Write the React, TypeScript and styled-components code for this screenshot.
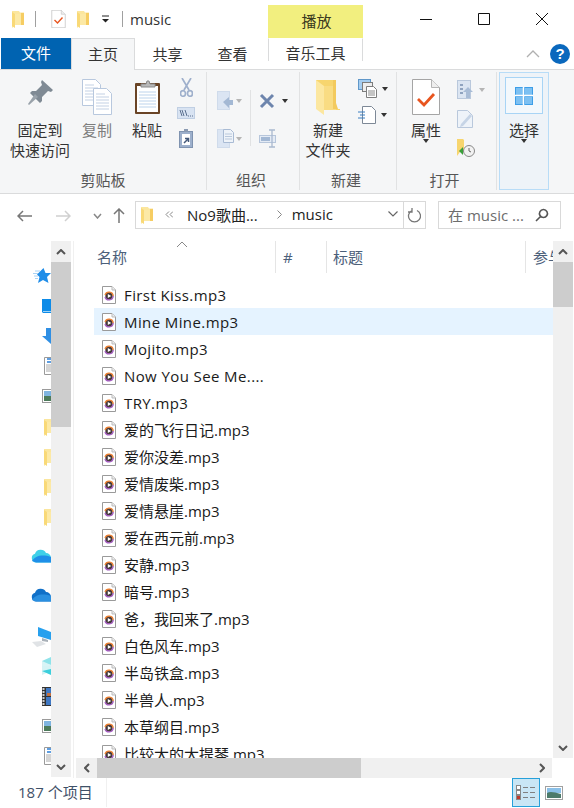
import React from 'react';
import styled, { createGlobalStyle } from 'styled-components';

const GlobalStyle = createGlobalStyle`
  html, body { margin: 0; padding: 0; background: #fff; }
  body {
    width: 574px;
    height: 808px;
    overflow: hidden;
    font-family: "Open Sans", "Noto Sans CJK SC", sans-serif;
    font-size: 15px;
    color: #1a1a1a;
  }
  svg { display: block; flex: none; }
`;

const Window = styled.div`
  width: 574px;
  height: 808px;
  display: flex;
  flex-direction: column;
  overflow: hidden;
`;

/* title bar */
const TitleBar = styled.div`
  height: 38px;
  display: flex;
  flex: none;
`;
const QuickAccess = styled.div`
  width: 268px;
  padding-left: 12px;
  box-sizing: border-box;
  display: flex;
  align-items: center;
`;
const ThinRule = styled.div<{ $ml: number; $mr: number }>`
  width: 1px;
  height: 16px;
  background: #a0a0a0;
  margin: 0 ${p => p.$mr}px 0 ${p => p.$ml}px;
`;
const Gap = styled.span<{ $w: number }>`
  width: ${p => p.$w}px;
`;
const TitleText = styled.span`
  font-size: 15px;
  color: #333;
  line-height: 20px;
`;
const ContextTab = styled.div`
  width: 95px;
  margin-top: 5px;
  background: #f2ef7f;
  color: #3a3a20;
  text-align: center;
  line-height: 33px;
  font-size: 15px;
  padding-left: 2px;
  box-sizing: border-box;
`;
const WindowButtons = styled.div`
  flex: 1;
  display: flex;
  align-items: center;
  padding: 0 0 0 57px;
  gap: 46px;
`;

/* tabs */
const TabRow = styled.div`
  height: 31px;
  display: flex;
  flex: none;
  align-items: stretch;
  position: relative;
`;
const FileTab = styled.div`
  width: 70px;
  flex: none;
  margin-left: 1px;
  background: #0063b1;
  color: #fff;
  text-align: center;
  line-height: 31px;
  font-size: 15px;
`;
const Tab = styled.div<{ $active?: boolean; $w: number }>`
  width: ${p => p.$w}px;
  flex: none;
  box-sizing: border-box;
  text-align: center;
  line-height: 30px;
  font-size: 15px;
  color: #333;
  background: ${p => (p.$active ? '#f5f6f7' : '#fff')};
  border: 1px solid ${p => (p.$active ? '#dadbdc' : 'transparent')};
  border-bottom: 0;
  margin-bottom: ${p => (p.$active ? '-1px' : '0')};
  position: relative;
  z-index: 1;
`;
const MusicTab = styled(Tab)`
  margin-left: 3px;
  border-left: 1px solid #dadbdc;
  border-right: 1px solid #dadbdc;
  margin-bottom: 8px;
  line-height: 28px;
  height: 23px;
`;
const TabTools = styled.div`
  flex: 1;
  display: flex;
  align-items: center;
  justify-content: flex-end;
  padding: 0 4px 0 0;
  gap: 10px;
`;
const HelpBubble = styled.div`
  width: 20px;
  height: 20px;
  border-radius: 50%;
  background: #0a68bd;
  color: #fff;
  font: bold 15px/20px "Liberation Sans", sans-serif;
  text-align: center;
`;

/* ribbon */
const Ribbon = styled.div`
  height: 125px;
  flex: none;
  box-sizing: border-box;
  background: #f5f6f7;
  border-top: 1px solid #dadbdc;
  border-bottom: 1px solid #dadbdc;
  padding-top: 2px;
  display: flex;
`;
const Group = styled.div<{ $w: number }>`
  width: ${p => p.$w}px;
  height: 118px;
  flex: none;
  box-sizing: border-box;
  border-right: 1px solid #e1e2e3;
  display: flex;
  flex-direction: column;
`;
const SelectGroup = styled(Group)`
  margin-left: 2px;
  border: 1px solid #b8dcf7;
  background: #eef3f8;
  align-items: center;
  padding-top: 4px;
`;
const GroupBody = styled.div<{ $pl?: number }>`
  flex: 1;
  display: flex;
  padding-left: ${p => p.$pl ?? 0}px;
`;
const GroupLabel = styled.div<{ $pr?: number }>`
  height: 20px;
  line-height: 20px;
  font-size: 15px;
  color: #555;
  text-align: center;
  padding-right: ${p => p.$pr ?? 0}px;
`;
const BigButton = styled.div<{ $w: number; $dim?: boolean }>`
  width: ${p => p.$w}px;
  display: flex;
  flex-direction: column;
  align-items: center;
  padding-top: 7px;
  font-size: 15px;
  line-height: 20px;
  white-space: nowrap;
  color: ${p => (p.$dim ? '#7d7d7d' : '#333')};
`;
const BigIcon = styled.div`
  height: 41px;
  display: flex;
  align-items: flex-start;
  justify-content: center;
`;
const SmallColumn = styled.div<{ $w: number; $pt: number; $gap: number; $pl?: number; $center?: boolean }>`
  width: ${p => p.$w}px;
  box-sizing: border-box;
  display: flex;
  flex-direction: column;
  align-items: ${p => (p.$center ? 'center' : 'flex-start')};
  padding-top: ${p => p.$pt}px;
  padding-left: ${p => p.$pl ?? 0}px;
  gap: ${p => p.$gap}px;
`;
const SmallRow = styled.div<{ $gap?: number }>`
  display: flex;
  align-items: center;
  gap: ${p => p.$gap ?? 5}px;
  height: 19px;
`;
const InnerRule = styled.div`
  width: 1px;
  height: 56px;
  margin-top: 18px;
  background: #e1e2e3;
`;
const Caret = styled.div<{ $dim?: boolean }>`
  width: 0;
  height: 0;
  border: 3px solid transparent;
  border-top: 4px solid ${p => (p.$dim ? '#b5b5b5' : '#333')};
  border-bottom: 0;
`;
const BigCaret = styled(Caret)`
  margin-top: -1px;
`;
const SelectFrame = styled.div`
  width: 38px;
  height: 37px;
  box-sizing: border-box;
  border: 1px solid #a8d4f5;
  background: #f3f8fc;
  display: flex;
  align-items: center;
  justify-content: center;
  margin-bottom: 6px;
`;
const SelectText = styled.div`
  font-size: 15px;
  line-height: 20px;
  color: #333;
`;

/* address bar */
const AddressRow = styled.div`
  height: 47px;
  flex: none;
  box-sizing: border-box;
  padding: 7px 0 0 17px;
  display: flex;
  align-items: flex-start;
`;
const NavIcon = styled.div<{ $w: number }>`
  width: ${p => p.$w}px;
  height: 29px;
  display: flex;
  align-items: center;
`;
const AddressBox = styled.div`
  width: 291px;
  height: 28px;
  flex: none;
  box-sizing: border-box;
  border: 1px solid #d9d9d9;
  display: flex;
  align-items: center;
  padding-left: 5px;
  font-size: 15px;
  color: #222;
`;
const Crumb = styled.span<{ $ml: number }>`
  margin-left: ${p => p.$ml}px;
  white-space: nowrap;
  padding-bottom: 2px;
`;
const RefreshCell = styled.div`
  margin-left: 5px;
  width: 21px;
  height: 26px;
  border-left: 1px solid #d9d9d9;
  display: flex;
  align-items: center;
  justify-content: center;
`;
const SearchBox = styled.div`
  width: 123px;
  height: 28px;
  flex: none;
  box-sizing: border-box;
  margin-left: 12px;
  border: 1px solid #d9d9d9;
  display: flex;
  align-items: center;
  justify-content: space-between;
  padding: 0 11px 0 9px;
  font-size: 15px;
  color: #6d6d6d;
  white-space: nowrap;
`;
const SearchHint = styled.span`
  padding-bottom: 2px;
`;

/* body */
const Body = styled.div`
  height: 537px;
  flex: none;
  display: flex;
`;
const NavPane = styled.div`
  width: 51px;
  flex: none;
  overflow: hidden;
  padding-top: 20px;
  box-sizing: border-box;
`;
const NavSlot = styled.div<{ $x: number; $gap: number }>`
  height: 30px;
  margin-top: ${p => p.$gap}px;
  padding-left: ${p => p.$x}px;
  display: flex;
  align-items: center;
`;
const VScroll = styled.div<{ $thumb: number; $h: number }>`
  width: 20px;
  height: ${p => p.$h}px;
  flex: none;
  background: #f0f0f0;
  display: flex;
  flex-direction: column;
  & > i {
    display: block;
    height: ${p => p.$thumb}px;
    background: #cdcdcd;
    flex: none;
  }
`;
const ScrollEnd = styled.div`
  height: 21px;
  flex: none;
  display: flex;
  align-items: center;
  justify-content: center;
`;
const ScrollSpacer = styled.div`
  flex: 1;
`;
const PaneRule = styled.div`
  width: 1px;
  margin: 0 2px 0 2px;
  background: #f0f0f0;
  height: 537px;
`;
const Main = styled.div`
  width: 497px;
  flex: none;
  display: flex;
  flex-direction: column;
`;
const MainTop = styled.div`
  height: 517px;
  display: flex;
`;
const ListArea = styled.div`
  width: 477px;
  overflow: hidden;
`;
const HeaderRow = styled.div`
  height: 32px;
  display: flex;
  margin-bottom: 8px;
  color: #4c607a;
  font-size: 15px;
`;
const HeaderCell = styled.div<{ $w: number; $pl: number }>`
  width: ${p => p.$w}px;
  flex: none;
  box-sizing: border-box;
  padding: 5px 0 0 ${p => p.$pl}px;
  border-right: 1px solid #e5e5e5;
  position: relative;
  line-height: 22px;
  white-space: nowrap;
`;
const LastHeaderCell = styled(HeaderCell)`
  border-right: 0;
  overflow: hidden;
`;
const SortMark = styled.div`
  position: absolute;
  top: 0;
  left: 100px;
`;
const FileRow = styled.div<{ $hover?: boolean; $latin?: boolean }>`
  height: 27px;
  margin-left: 18px;
  padding-left: 8px;
  display: flex;
  align-items: center;
  gap: 8px;
  font-size: 15px;
  letter-spacing: ${p => (p.$latin ? '0.4px' : '0')};
  color: #1a1a1a;
  white-space: nowrap;
  background: ${p => (p.$hover ? '#e5f3ff' : 'transparent')};
`;
const HScroll = styled.div`
  height: 20px;
  width: 476px;
  display: flex;
  background: #f0f0f0;
  flex: none;
`;
const HEnd = styled.div`
  width: 21px;
  flex: none;
  display: flex;
  align-items: center;
  justify-content: center;
`;
const HThumb = styled.div`
  width: 264px;
  background: #cdcdcd;
`;

/* status */
const StatusBar = styled.div`
  flex: 1;
  display: flex;
  align-items: stretch;
  padding-left: 18px;
  font-size: 15px;
  color: #3f5168;
`;
const StatusText = styled.div`
  width: 88px;
  line-height: 29px;
  white-space: nowrap;
  border-right: 1px solid #f0f0f0;
  margin-bottom: 4px;
`;
const ViewDetails = styled.div`
  margin-left: 405px;
  width: 28px;
  height: 29px;
  box-sizing: border-box;
  background: #c9e6f5;
  border: 1px solid #26a0da;
  display: flex;
  align-items: center;
  justify-content: center;
`;
const ViewThumb = styled.div`
  margin-left: 5px;
  height: 29px;
  display: flex;
  align-items: center;
`;

/* drawings */
const Folder = ({ w = 12, h = 17 }: { w?: number; h?: number }) => (
  <svg width={w} height={h} viewBox="0 0 12 17">
    <path d="M0 0h7l1 1.500h4V14H3l-3 3z" fill="#fbe69e" />
    <path d="M0 1l3 2v14l-3-2z" fill="#f9d977" />
    <path d="M3 3h6v11H3z" fill="#fce9a6" />
    <path d="M9 2h3v12H9z" fill="#f6cd63" />
  </svg>
);
const BigFolder = () => (
  <svg width="26" height="36" viewBox="0 0 26 36">
    <path d="M1 1h18v29h6v1H9L1 26z" fill="#f7d56e" />
    <path d="M1 1l8 6v29l-8-6z" fill="#fce7a0" />
    <path d="M9 7h11l1 2v22H9z" fill="#f9dc83" />
    <path d="M18 1h3v23l2 6h-5z" fill="#f3ca5e" />
  </svg>
);
const CheckDoc = ({ w, h }: { w: number; h: number }) => (
  <svg width={w} height={h} viewBox="0 0 28 36">
    <path d="M.5.500h19l8 8v27H.5z" fill="#fff" stroke="#a5a5a5" />
    <path d="M19.500.500v8h8" fill="#eee" stroke="#b5b5b5" />
    <path d="M6 20l6 6 10-11" fill="none" stroke="#e8551f" strokeWidth="2.800" />
  </svg>
);
const DropMark = () => (
  <svg width="9" height="8" viewBox="0 0 9 8">
    <path d="M1 1h7" stroke="#222" />
    <path d="M1 4h7L4.500 7.500z" fill="#222" />
  </svg>
);
const Pin = () => (
  <svg width="27" height="27" viewBox="0 0 27 27">
    <path d="M15 1l11 10-2 2-3-1-6 6 0 4-2 2-10-10 2-2 4 0 6-6-1-3z" fill="#7f8a94" />
    <path d="M8 15l3 3-9 8-1-1z" fill="#9aa3ab" />
  </svg>
);
const LinesDoc = ({ x, y }: { x: number; y: number }) => (
  <g transform={`translate(${x} ${y})`}>
    <path d="M.5.500h13l5 5v21H.5z" fill="#fff" stroke="#b8c8de" />
    <path d="M3 6h9M3 9h13M3 12h13M3 15h13M3 18h13M3 21h13" stroke="#c3d1e4" />
  </g>
);
const CopyIcon = () => (
  <svg width="31" height="37" viewBox="0 0 31 37">
    <LinesDoc x={0} y={0} />
    <LinesDoc x={11} y={9} />
  </svg>
);
const PasteIcon = () => (
  <svg width="27" height="36" viewBox="0 0 27 36">
    <rect x="1" y="4" width="25" height="31" rx="1" fill="#6a4426" />
    <rect x="3" y="7" width="21" height="26" fill="#fff" />
    <path d="M5 13h17M5 16h17M5 19h17M5 22h17M5 25h17M5 28h17" stroke="#bcd3ec" />
    <path d="M7 8V5h5l1-3 2 0 1 3h5v3z" fill="#b9b9b9" stroke="#8a8a8a" />
  </svg>
);
const CutIcon = () => (
  <svg width="13" height="19" viewBox="0 0 13 19" fill="none" stroke="#9fb0cc" strokeWidth="1.700">
    <path d="M2 0l7 12M11 0L4 12" />
    <ellipse cx="3" cy="15.500" rx="2.500" ry="2.800" />
    <ellipse cx="10" cy="15.500" rx="2.500" ry="2.800" />
  </svg>
);
const PathIcon = () => (
  <svg width="18" height="12" viewBox="0 0 18 12">
    <rect x=".5" y=".5" width="17" height="11" fill="#d8e3f2" stroke="#c0cfe3" />
    <path d="M3 3l2 6M5 3l2 6M8 3l2 6" stroke="#5a6f8e" />
    <path d="M11 9h1M13 9h1M15 9h1" stroke="#5a6f8e" />
  </svg>
);
const ShortcutPaste = () => (
  <svg width="14" height="19" viewBox="0 0 14 19">
    <rect x=".5" y="2.500" width="13" height="16" fill="#9db0cc" stroke="#7f93b0" />
    <rect x="3" y="5" width="8" height="11" fill="#fff" />
    <path d="M5 0h4v3H5z" fill="#8a9ab2" />
    <path d="M5 14l4-4M6 9.500h3.500V13" stroke="#44597a" strokeWidth="1.500" fill="none" />
  </svg>
);
const MoveIcon = ({ copy }: { copy?: boolean }) => (
  <svg width="18" height="19" viewBox="0 0 18 19">
    <rect x=".5" y=".5" width="12" height="18" fill="#dbe5f3" stroke="#cfdbeb" />
    {copy ? (
      <>
        <path d="M6.500.500h7l3 3v10h-10z" fill="#eef3f9" stroke="#a9bbd4" />
        <path d="M8 5h7M8 7.500h7M8 10h7" stroke="#b9c8dc" />
      </>
    ) : (
      <path d="M6 11l6-5v3h4v5h-4v3z" fill="#a3b8d4" />
    )}
  </svg>
);
const DeleteIcon = () => (
  <svg width="16" height="16" viewBox="0 0 16 16">
    <path d="M2 2l12 12M14 2L2 14" stroke="#6d85ad" strokeWidth="3" />
  </svg>
);
const RenameIcon = () => (
  <svg width="18" height="19" viewBox="0 0 18 19">
    <rect x=".5" y="6.500" width="16" height="7" fill="#e4ebf5" stroke="#b7c6db" />
    <rect x="2" y="8" width="9" height="4" fill="#a3b8d4" />
    <path d="M10 1h6M10 18h6M13 1v17" stroke="#a9b9d0" strokeWidth="1.300" />
  </svg>
);
const NewItemIcon = () => (
  <svg width="19" height="19" viewBox="0 0 19 19">
    <rect x=".5" y=".5" width="12" height="10" fill="#a5cdf0" stroke="#5f97c9" />
    <rect x="4.500" y="3.500" width="10" height="9" fill="#eee" stroke="#7d7d7d" />
    <path d="M8.500 7.500h7l3 3v8h-10z" fill="#fff" stroke="#7d7d7d" />
    <path d="M10 12h7M10 14h7M10 16h7" stroke="#8a8a8a" />
  </svg>
);
const NewDocIcon = () => (
  <svg width="18" height="18" viewBox="0 0 18 18">
    <path d="M4.500.500h9l4 4v13h-13z" fill="#fff" stroke="#7d8896" />
    <path d="M0 6h7M2 9h5M0 12h7" stroke="#3a7ec2" />
  </svg>
);
const OpenIcon = () => (
  <svg width="17" height="19" viewBox="0 0 17 19">
    <rect x=".5" y=".5" width="13" height="18" fill="#dbe5f2" stroke="#b9c8dc" />
    <path d="M3 4h3v2H3zM3 8h3v2H3zM3 12h3v2H3z" fill="#8fa3bf" />
    <path d="M11 7l5 5h-3v6H9v-6H6z" fill="#a8bcd6" />
  </svg>
);
const EditIcon = () => (
  <svg width="17" height="18" viewBox="0 0 17 18">
    <path d="M.5.500h10l5 5v12H.5z" fill="#eef3f9" stroke="#b9c8dc" />
    <path d="M4 14l9-10 2 2-9 10-3 1z" fill="#c6d4e6" />
  </svg>
);
const HistoryIcon = () => (
  <svg width="18" height="18" viewBox="0 0 18 18">
    <path d="M0 0h6l1 1v12H3l-3 4z" fill="#f7d56e" />
    <circle cx="12" cy="12" r="5.500" fill="#f2f2f2" stroke="#888" />
    <path d="M12 9v3l2 1" stroke="#666" fill="none" />
    <path d="M2 12l4-4v8z" fill="#3aa03a" />
  </svg>
);
const SelectGrid = () => (
  <svg width="18" height="18" viewBox="0 0 18 18">
    <rect width="18" height="18" fill="#3d9ee8" />
    <path d="M1 1h7v7H1zM10 1h7v7h-7zM1 10h7v7H1zM10 10h7v7h-7z" fill="#7cc0f2" />
    <path d="M8.500 0v18M0 8.500h18" stroke="#fff" strokeWidth="1.500" />
  </svg>
);
const Line = ({ w, h, d, c = '#333', sw = 1 }: { w: number; h: number; d: string; c?: string; sw?: number }) => (
  <svg width={w} height={h} viewBox={`0 0 ${w} ${h}`}>
    <path d={d} fill="none" stroke={c} strokeWidth={sw} />
  </svg>
);
const MusicFile = () => (
  <svg width="14" height="18" viewBox="0 0 14 18">
    <path d="M.5.500h9.500l3.500 3.500v13.500H.5z" fill="#fff" stroke="#9a9a9a" />
    <path d="M10 .500v3.500h3.500" fill="#eee" stroke="#bbb" />
    <circle cx="7" cy="10" r="3.700" fill="#453a3a" />
    <path d="M3 9a4.200 4.200 0 0 1 8.200 1" fill="none" stroke="#ec7f30" strokeWidth="1.300" />
    <path d="M11.200 10a4.200 4.200 0 0 1-8.200 1" fill="none" stroke="#a45cc0" strokeWidth="1.300" />
    <path d="M5.800 8v4l3.400-2z" fill="#fff" />
  </svg>
);
const Star = () => (
  <svg width="18" height="16" viewBox="0 0 18 16">
    <path d="M10.500 0l2 5H18l-4 4 1.500 6-5.500-3-5 3 1.500-6-2.500-2.500z" fill="#1f8de8" />
    <path d="M0 5.500h5M1 8h4M2 10.500h3M2 3h5" stroke="#a8d2f5" />
  </svg>
);
const BlueBox = () => (
  <svg width="9" height="14" viewBox="0 0 9 14">
    <path d="M0 0h9v14H1l-1-1z" fill="#0d8be8" />
    <path d="M1 12h8v1H1z" fill="#9fd3f7" />
  </svg>
);
const DownArrow = () => (
  <svg width="9" height="16" viewBox="0 0 9 16">
    <path d="M4 0h5v16L0 8h4z" fill="#2f8fe4" />
  </svg>
);
const NavDoc = () => (
  <svg width="8" height="18" viewBox="0 0 8 18">
    <path d="M.5.500H8v17H.5z" fill="#fff" stroke="#9a9a9a" />
    <path d="M3 2h5M3 5h5" stroke="#2a7fd8" strokeWidth="1.500" />
    <path d="M2 8h6M2 10h6M2 12h6M2 14h6" stroke="#aaa" />
  </svg>
);
const NavImage = () => (
  <svg width="10" height="14" viewBox="0 0 10 14">
    <rect x=".5" y=".5" width="10" height="13" fill="#fff" stroke="#9a9a9a" />
    <rect x="2" y="2" width="8" height="5" fill="#7fb4e0" />
    <rect x="2" y="7" width="8" height="5" fill="#4c7a5a" />
  </svg>
);
const Cloud = ({ a, b }: { a: string; b: string }) => (
  <svg width="20" height="14" viewBox="0 0 20 14">
    <path d="M5 13.500a4.500 4.500 0 0 1-1-8.800A6 6 0 0 1 15 4a5 5 0 0 1 5 5v4.500z" fill={a} />
    <path d="M1 12c3-5 10-7 19-4v5.500H5z" fill={b} />
  </svg>
);
const Computer = () => (
  <svg width="19" height="22" viewBox="0 0 19 22">
    <path d="M6 1l13 5v8L6 10z" fill="#27a0ee" />
    <path d="M10 12l6 2v2l-6-1z" fill="#a8b0b8" />
    <path d="M0 16l9-1 5 3-9 3z" fill="#e0e3e6" />
  </svg>
);
const Cube = () => (
  <svg width="9" height="18" viewBox="0 0 9 18">
    <path d="M0 4l9-4v8L0 6z" fill="#8fe3ea" />
    <path d="M0 4l9 4v1H0z" fill="#d8f4f6" />
    <path d="M0 9h9v5l-9 4z" fill="#d5f3f5" />
    <path d="M0 14l9-2v6z" fill="#3ccfdc" />
  </svg>
);
const Film = () => (
  <svg width="9" height="19" viewBox="0 0 9 19">
    <rect width="9" height="19" fill="#333" />
    <rect x="4" y="1" width="5" height="8" fill="#3f78c4" />
    <rect x="4" y="10" width="5" height="8" fill="#3f78c4" />
    <path d="M5 6h4v3H5z" fill="#c4703f" />
    <path d="M1.500 1v17" stroke="#ccc" strokeDasharray="2 1" strokeWidth="2" />
  </svg>
);
const DetailsGlyph = () => (
  <svg width="20" height="15" viewBox="0 0 20 15">
    <rect x=".5" y=".5" width="4" height="4" fill="#fff" stroke="#888" />
    <rect x=".5" y="5.500" width="4" height="4" fill="#fff" stroke="#888" />
    <rect x=".5" y="10.500" width="4" height="4" fill="#c0392b" stroke="#888" />
    <path d="M7 2.500h5M14 2.500h5M7 7.500h5M14 7.500h5M7 12.500h5M14 12.500h5" stroke="#808080" />
  </svg>
);
const ThumbGlyph = () => (
  <svg width="18" height="14" viewBox="0 0 18 14">
    <rect x=".5" y=".5" width="17" height="13" fill="#fff" stroke="#a0a0a0" />
    <rect x="2" y="2" width="14" height="5" fill="#8ac0e8" />
    <path d="M2 7c3-2 7-1 14 1v4H2z" fill="#4c7a6a" />
  </svg>
);

const navItems: { x: number; gap: number; icon: React.ReactNode }[] = [
  { x: 33, gap: 0, icon: <Star /> },
  { x: 42, gap: 0, icon: <BlueBox /> },
  { x: 42, gap: 0, icon: <DownArrow /> },
  { x: 44, gap: 0, icon: <NavDoc /> },
  { x: 42, gap: 0, icon: <NavImage /> },
  { x: 44, gap: 1, icon: <Folder /> },
  { x: 44, gap: 0, icon: <Folder /> },
  { x: 44, gap: 0, icon: <Folder /> },
  { x: 44, gap: 0, icon: <Folder /> },
  { x: 31, gap: 9, icon: <Cloud a="#3fd0e8" b="#1f8fe8" /> },
  { x: 31, gap: 9, icon: <Cloud a="#1070c8" b="#2a8fe0" /> },
  { x: 32, gap: 12, icon: <Computer /> },
  { x: 42, gap: -1, icon: <Cube /> },
  { x: 42, gap: 0, icon: <Film /> },
  { x: 42, gap: 0, icon: <NavImage /> },
  { x: 44, gap: 0, icon: <NavDoc /> },
];

const files = [
  'First Kiss.mp3', 'Mine Mine.mp3', 'Mojito.mp3', 'Now You See Me....', 'TRY.mp3',
  '爱的飞行日记.mp3', '爱你没差.mp3', '爱情废柴.mp3', '爱情悬崖.mp3', '爱在西元前.mp3',
  '安静.mp3', '暗号.mp3', '爸，我回来了.mp3', '白色风车.mp3', '半岛铁盒.mp3',
  '半兽人.mp3', '本草纲目.mp3', '比较大的大提琴.mp3',
];

const chevronUp = <Line w={10} h={6} d="M1 5l4-4 4 4" c="#555" sw={2} />;
const chevronDown = <Line w={10} h={6} d="M1 1l4 4 4-4" c="#555" sw={2} />;

export default function App() {
  return (
    <>
      <GlobalStyle />
      <Window>
        <TitleBar>
          <QuickAccess>
            <Folder />
            <ThinRule $ml={11} $mr={15} />
            <CheckDoc w={15} h={18} />
            <Gap $w={11} />
            <Folder />
            <Gap $w={12} />
            <DropMark />
            <ThinRule $ml={12} $mr={7} />
            <TitleText>music</TitleText>
          </QuickAccess>
          <ContextTab>播放</ContextTab>
          <WindowButtons>
            <Line w={12} h={13} d="M0 6.500h12" c="#111" />
            <Line w={12} h={12} d="M.5.500h11v11H.5z" c="#111" />
            <Line w={12} h={12} d="M0 0l12 12M12 0L0 12" c="#111" />
          </WindowButtons>
        </TitleBar>

        <TabRow>
          <FileTab>文件</FileTab>
          <Tab $active $w={64}>主页</Tab>
          <Tab $w={65}>共享</Tab>
          <Tab $w={65}>查看</Tab>
          <MusicTab $w={95}>音乐工具</MusicTab>
          <TabTools>
            <Line w={14} h={8} d="M1 7l6-6 6 6" c="#b0b0b0" sw={1.3} />
            <HelpBubble>?</HelpBubble>
          </TabTools>
        </TabRow>

        <Ribbon>
          <Group $w={207}>
            <GroupBody $pl={10}>
              <BigButton $w={60}>
                <BigIcon><Pin /></BigIcon>
                <span>固定到</span>
                <span>快速访问</span>
              </BigButton>
              <BigButton $w={54} $dim>
                <BigIcon><CopyIcon /></BigIcon>
                <span>复制</span>
              </BigButton>
              <BigButton $w={46}>
                <BigIcon><PasteIcon /></BigIcon>
                <span>粘贴</span>
              </BigButton>
              <SmallColumn $w={32} $pt={6} $gap={10} $center>
                <CutIcon />
                <PathIcon />
                <ShortcutPaste />
              </SmallColumn>
            </GroupBody>
            <GroupLabel>剪贴板</GroupLabel>
          </Group>

          <Group $w={93}>
            <GroupBody $pl={10}>
              <SmallColumn $w={33} $pt={19} $gap={19}>
                <SmallRow $gap={1}><MoveIcon /><Caret $dim /></SmallRow>
                <SmallRow $gap={1}><MoveIcon copy /><Caret $dim /></SmallRow>
              </SmallColumn>
              <InnerRule />
              <SmallColumn $w={48} $pt={19} $gap={19} $pl={8}>
                <SmallRow $gap={7}><DeleteIcon /><Caret /></SmallRow>
                <SmallRow><RenameIcon /></SmallRow>
              </SmallColumn>
            </GroupBody>
            <GroupLabel $pr={4}>组织</GroupLabel>
          </Group>

          <Group $w={97}>
            <GroupBody>
              <BigButton $w={56}>
                <BigIcon><BigFolder /></BigIcon>
                <span>新建</span>
                <span>文件夹</span>
              </BigButton>
              <SmallColumn $w={38} $pt={7} $gap={7} $pl={2}>
                <SmallRow><NewItemIcon /><Caret /></SmallRow>
                <SmallRow><NewDocIcon /><Caret /></SmallRow>
              </SmallColumn>
            </GroupBody>
            <GroupLabel $pr={4}>新建</GroupLabel>
          </Group>

          <Group $w={100}>
            <GroupBody>
              <BigButton $w={58}>
                <BigIcon><CheckDoc w={28} h={36} /></BigIcon>
                <span>属性</span>
                <BigCaret />
              </BigButton>
              <SmallColumn $w={40} $pt={8} $gap={10} $pl={2}>
                <SmallRow><OpenIcon /><Caret $dim /></SmallRow>
                <SmallRow><EditIcon /></SmallRow>
                <SmallRow><HistoryIcon /></SmallRow>
              </SmallColumn>
            </GroupBody>
            <GroupLabel $pr={4}>打开</GroupLabel>
          </Group>

          <SelectGroup $w={50}>
            <SelectFrame><SelectGrid /></SelectFrame>
            <SelectText>选择</SelectText>
            <BigCaret />
          </SelectGroup>
        </Ribbon>

        <AddressRow>
          <NavIcon $w={39}>
            <Line w={15} h={12} d="M15 6H1M6 1L1 6l5 5" c="#777" sw={1.5} />
          </NavIcon>
          <NavIcon $w={37}>
            <Line w={15} h={12} d="M0 6h14M9 1l5 5-5 5" c="#d0d0d0" sw={1.5} />
          </NavIcon>
          <NavIcon $w={20}>
            <Line w={9} h={6} d="M1 1l3.500 4L8 1" c="#888" sw={1.5} />
          </NavIcon>
          <NavIcon $w={22}>
            <Line w={12} h={15} d="M6 15V1M1 6l5-5 5 5" c="#777" sw={1.5} />
          </NavIcon>
          <AddressBox>
            <Folder />
            <Crumb $ml={12}>
              <Line w={8} h={7} d="M4 .5L1 3.500l3 3M8 .5L5 3.500l3 3" c="#888" />
            </Crumb>
            <Crumb $ml={14}>No9歌曲...</Crumb>
            <Crumb $ml={19}>
              <Line w={5} h={9} d="M.5.500l4 4-4 4" c="#888" />
            </Crumb>
            <Crumb $ml={10}>music</Crumb>
            <Crumb $ml={55}>
              <Line w={10} h={6} d="M.5.500L5 5 9.500.500" c="#666" sw={1.2} />
            </Crumb>
            <RefreshCell>
              <Line w={14} h={16} d="M5 3.500a6 6 0 1 0 5 0M5 1v4H1" c="#777" sw={1.3} />
            </RefreshCell>
          </AddressBox>
          <SearchBox>
            <SearchHint>在 music ...</SearchHint>
            <Line w={14} h={14} d="M8.500 1.500a4 4 0 1 1-.1 0zM6 8l-5 5" c="#555" sw={1.6} />
          </SearchBox>
        </AddressRow>

        <Body>
          <NavPane>
            {navItems.map((n, i) => (
              <NavSlot key={i} $x={n.x} $gap={n.gap}>{n.icon}</NavSlot>
            ))}
          </NavPane>
          <VScroll $thumb={165} $h={536}>
            <ScrollEnd>{chevronUp}</ScrollEnd>
            <i />
            <ScrollSpacer />
            <ScrollEnd>{chevronDown}</ScrollEnd>
          </VScroll>
          <PaneRule />
          <Main>
            <MainTop>
              <ListArea>
                <HeaderRow>
                  <HeaderCell $w={200} $pl={21}>
                    名称
                    <SortMark>
                      <Line w={12} h={7} d="M1 6l5-5 5 5" c="#888" />
                    </SortMark>
                  </HeaderCell>
                  <HeaderCell $w={51} $pl={7}>#</HeaderCell>
                  <HeaderCell $w={199} $pl={6}>标题</HeaderCell>
                  <LastHeaderCell $w={27} $pl={7}>参与创作</LastHeaderCell>
                </HeaderRow>
                {files.map((f, i) => (
                  <FileRow key={f} $hover={i === 1} $latin={i < 5}>
                    <MusicFile />
                    {f}
                  </FileRow>
                ))}
              </ListArea>
              <VScroll $thumb={45} $h={517}>
                <ScrollEnd>{chevronUp}</ScrollEnd>
                <i />
                <ScrollSpacer />
                <ScrollEnd>{chevronDown}</ScrollEnd>
              </VScroll>
            </MainTop>
            <HScroll>
              <HEnd><Line w={6} h={10} d="M5 1L1 5l4 4" c="#555" sw={2} /></HEnd>
              <HThumb />
              <ScrollSpacer />
              <HEnd><Line w={6} h={10} d="M1 1l4 4-4 4" c="#555" sw={2} /></HEnd>
            </HScroll>
          </Main>
        </Body>

        <StatusBar>
          <StatusText>187 个项目</StatusText>
          <ViewDetails><DetailsGlyph /></ViewDetails>
          <ViewThumb><ThumbGlyph /></ViewThumb>
        </StatusBar>
      </Window>
    </>
  );
}
